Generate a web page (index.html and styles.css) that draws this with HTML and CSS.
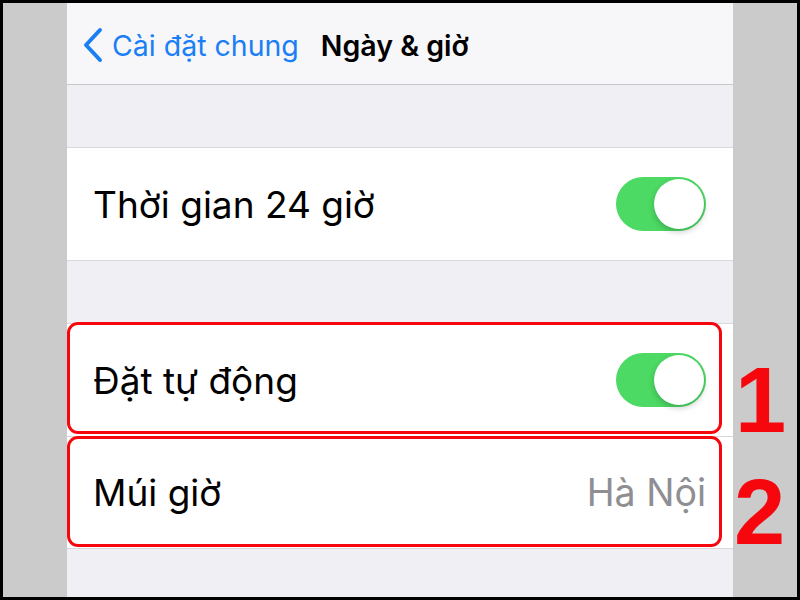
FILE: index.html
```html
<!DOCTYPE html>
<html lang="vi">
  <head>
    <meta charset="UTF-8" />
    <title>Ngày &amp; giờ</title>
    <link rel="stylesheet" href="styles.css">
  </head>
  <body>
    <div class="frame">
      <div class="side"></div>
      <div class="phone">
        <!-- Navigation bar -->
        <div class="navbar">
          <a class="back" href="#">
            <svg width="22" height="36" viewBox="0 0 22 36">
              <path d="M18 3 L4 18 L18 33" fill="none" stroke="#1a7ff5" stroke-width="4" stroke-linecap="round" stroke-linejoin="round" />
            </svg>
            <span>Cài đặt chung</span>
          </a>
          <span class="title">Ngày &amp; giờ</span>
        </div>

        <div class="gap gap-top"></div>
        <div class="group">
          <div class="row">
            <span class="label">Thời gian 24 giờ</span>
            <span class="switch"><span class="knob"></span></span>
          </div>
        </div>

        <div class="gap"></div>
        <div class="group">
          <div class="row">
            <span class="label">Đặt tự động</span>
            <span class="switch"><span class="knob"></span></span>
            <span class="mark mark-first"><span class="num">1</span></span>
          </div>
          <div class="row">
            <span class="label">Múi giờ</span>
            <span class="value">Hà Nội</span>
            <span class="mark mark-second"><span class="num">2</span></span>
          </div>
        </div>
        <div class="gap gap-bottom"></div>
      </div>
      <div class="side"></div>
    </div>
  </body>
</html>
```

FILE: styles.css
```css
body {
  margin: 0;
  background: #000;
  font-family: Inter, "Noto Sans", sans-serif;
}

.frame {
  display: flex;
  height: 594px;
  padding: 3px;
}

.side {
  width: 64px;
  background: #cbcbcb;
}

.phone {
  width: 666px;
  background: #efeff4;
  display: flex;
  flex-direction: column;
}

.navbar {
  height: 82px;
  background: #f7f7f9;
  border-bottom: 1px solid #c8c7cc;
  display: flex;
  align-items: center;
  gap: 22px;
  padding: 4px 0 0 15px;
  box-sizing: border-box;
}

.back {
  display: flex;
  align-items: center;
  gap: 8px;
  color: #1a7ff5;
  text-decoration: none;
  font-size: 28.5px;
}

.back svg {
  margin-top: -2px;
}

.title {
  font-size: 28.5px;
  font-weight: 600;
  color: #000;
}

.gap {
  height: 62px;
}

.gap-top {
  height: 62px;
}

.gap-bottom {
  flex: 1;
}

.group {
  background: #fff;
  border-top: 1px solid #d8d8dc;
  border-bottom: 1px solid #d8d8dc;
}

.row {
  position: relative;
  height: 112px;
  display: flex;
  align-items: center;
  justify-content: space-between;
  padding: 0 27px 0 26px;
}

.row + .row {
  border-top: 1px solid #d8d8dc;
  height: 111px;
}

.label {
  font-size: 37px;
  color: #000;
}

.value {
  font-size: 37.5px;
  color: #8e8e93;
}

.switch {
  position: relative;
  width: 90px;
  height: 54px;
  border-radius: 27px;
  background: #4cd964;
}

.knob {
  position: absolute;
  top: 2px;
  right: 2px;
  width: 50px;
  height: 50px;
  border-radius: 50%;
  background: #fff;
  box-shadow: 0 3px 6px rgba(0, 0, 0, 0.2);
}

/* red annotation frames */
.mark {
  position: absolute;
  left: 0;
  right: 11px;
  border: 3px solid #f5070d;
  border-radius: 11px;
}

.mark-first {
  top: -2px;
  bottom: 2px;
}

.mark-second {
  top: -1px;
  bottom: 1px;
}

.num {
  position: absolute;
  left: 665px;
  bottom: -15px;
  font-family: "Liberation Sans", Arial, sans-serif;
  font-weight: 700;
  font-size: 92px;
  line-height: 1;
  color: #f5070d;
}

.mark-second .num {
  left: 664px;
  bottom: -14px;
}
```
